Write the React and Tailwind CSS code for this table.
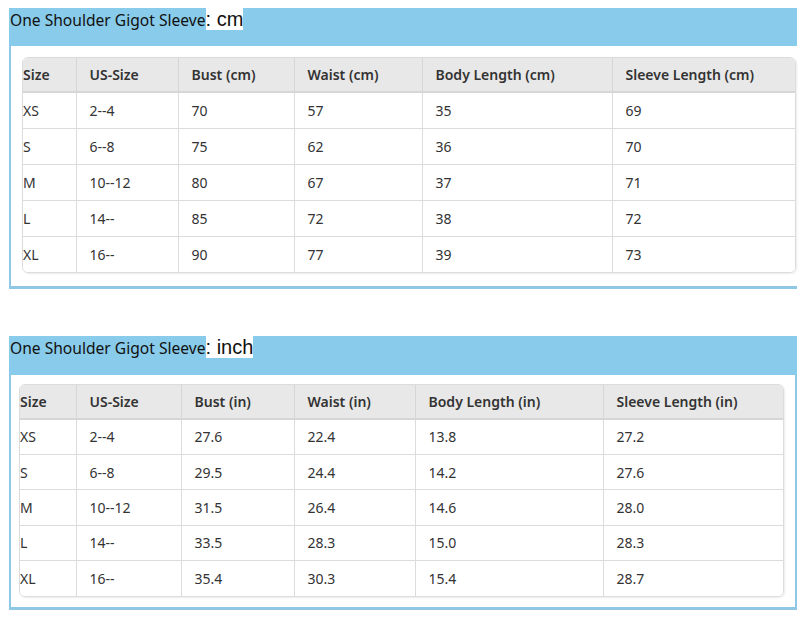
const cmRows = [
  ['XS', '2--4', '70', '57', '35', '69'],
  ['S', '6--8', '75', '62', '36', '70'],
  ['M', '10--12', '80', '67', '37', '71'],
  ['L', '14--', '85', '72', '38', '72'],
  ['XL', '16--', '90', '77', '39', '73'],
];

const inchRows = [
  ['XS', '2--4', '27.6', '22.4', '13.8', '27.2'],
  ['S', '6--8', '29.5', '24.4', '14.2', '27.6'],
  ['M', '10--12', '31.5', '26.4', '14.6', '28.0'],
  ['L', '14--', '33.5', '28.3', '15.0', '28.3'],
  ['XL', '16--', '35.4', '30.3', '15.4', '28.7'],
];

const SizeTable = ({ unit, rows, widths, rowClass }) => {
  const heads = ['Size', 'US-Size', `Bust (${unit})`, `Waist (${unit})`, `Body Length (${unit})`, `Sleeve Length (${unit})`];
  const total = widths.reduce((a, b) => a + b, 0);
  return (
    <div className="overflow-hidden rounded-[6px] border border-[#dcdcdc] shadow-[1px_1px_2px_rgba(0,0,0,0.08)]" style={{ width: total }}>
      <table className="w-full table-fixed border-collapse text-[14px] text-[#333]" style={{ fontFamily: '"Noto Sans", "Open Sans", sans-serif' }}>
        <colgroup>
          {widths.map((w, i) => (
            <col key={i} style={{ width: w }} />
          ))}
        </colgroup>
        <thead>
          <tr className="h-[34px] bg-[#e8e8e8]">
            {heads.map((h, i) => (
              <th
                key={h}
                className={`border-b-2 border-[#d6d6d6] text-left font-semibold ${i === 0 ? 'pl-0' : 'border-l pl-[13px]'}`}
              >
                {h}
              </th>
            ))}
          </tr>
        </thead>
        <tbody>
          {rows.map((r, ri) => (
            <tr key={ri} className={`bg-white ${rowClass}`}>
              {r.map((c, i) => (
                <td
                  key={i}
                  className={`border-[#dcdcdc] font-normal ${ri > 0 ? 'border-t' : ''} ${i === 0 ? 'pl-0' : 'border-l pl-[13px]'}`}
                >
                  {c}
                </td>
              ))}
            </tr>
          ))}
        </tbody>
      </table>
    </div>
  );
};

const Section = ({ unit, headUnit, rows, widths, rowClass, bandClass, bodyClass }) => (
  <div className="w-[788px]">
    <div className={`bg-[#88cbea] pl-[1px] ${bandClass}`}>
      <span className="text-[15.6px] text-[#111]" style={{ fontFamily: '"Noto Sans", sans-serif' }}>
        One Shoulder Gigot Sleeve
      </span>
      <span className="bg-white text-[20px] text-[#111]" style={{ fontFamily: '"Liberation Sans", Arial, sans-serif' }}>
        : {unit}
      </span>
    </div>
    <div className={`border-[#8ec8e4] ${bodyClass}`}>
      <SizeTable unit={headUnit} rows={rows} widths={widths} rowClass={rowClass} />
    </div>
  </div>
);

export default function App() {
  return (
    <div className="min-h-screen bg-white pl-[9px] pt-[8px]">
      <Section
        unit="cm"
        headUnit="cm"
        rows={cmRows}
        widths={[53, 102, 116, 128, 190, 185]}
        rowClass="h-[36px]"
        bandClass="h-[38px] leading-[23px]"
        bodyClass="border-l-2 border-b-[3px] pl-[11px] pt-[11px] pb-[13px]"
      />
      <div className="h-[47px]" />
      <Section
        unit="inch"
        headUnit="in"
        rows={inchRows}
        widths={[56, 105, 113, 121, 188, 182]}
        rowClass="h-[35.4px]"
        bandClass="h-[39px] leading-[23px]"
        bodyClass="border-l-2 border-r-2 border-b-[3px] pl-[8px] pt-[9px] pb-[10px]"
      />
    </div>
  );
}
